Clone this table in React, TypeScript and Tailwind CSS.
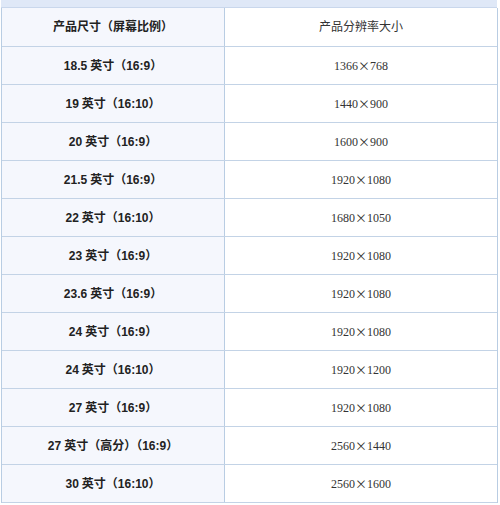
import React from "react";

const rows: [string, string, string, string][] = [
  ["18.5", "英寸（16:9）", "1366", "768"],
  ["19", "英寸（16:10）", "1440", "900"],
  ["20", "英寸（16:9）", "1600", "900"],
  ["21.5", "英寸（16:9）", "1920", "1080"],
  ["22", "英寸（16:10）", "1680", "1050"],
  ["23", "英寸（16:9）", "1920", "1080"],
  ["23.6", "英寸（16:9）", "1920", "1080"],
  ["24", "英寸（16:9）", "1920", "1080"],
  ["24", "英寸（16:10）", "1920", "1200"],
  ["27", "英寸（16:9）", "1920", "1080"],
  ["27", "英寸（高分）（16:9）", "2560", "1440"],
  ["30", "英寸（16:10）", "2560", "1600"],
];

const cjk = { fontFamily: '"Liberation Sans", "Noto Sans CJK SC", sans-serif' };
const serif = { fontFamily: '"Liberation Serif", "Noto Sans CJK SC", serif' };
const cjkOnly = { fontFamily: '"Noto Sans CJK SC", sans-serif' };

export default function App() {
  return (
    <div className="w-[500px] h-[505px] bg-white overflow-hidden">
      <div className="h-[8px] bg-[#dfe8f7] border-b border-[#c9d7ec] ml-[1px] mr-[3px]" />
      <div className="ml-[1px] w-[497px] border-l border-r border-[#b9cde3]">
        <div className="flex h-[39px] border-b border-[#c3d3e6]">
          <div
            className="w-[223px] flex items-center justify-center bg-[#f5f7fd] border-r border-[#b9cde3] text-[12px] font-bold text-[#222]"
            style={cjk}
          >
            产品尺寸（屏幕比例）
          </div>
          <div
            className="flex-1 flex items-center justify-center text-[12px] text-[#333]"
            style={cjk}
          >
            产品分辨率大小
          </div>
        </div>
        {rows.map(([n, rest, w, h], i) => (
          <div key={i} className="flex h-[38px] border-b border-[#c3d3e6]">
            <div
              className="w-[223px] flex items-center justify-center bg-[#f5f7fd] border-r border-[#b9cde3] text-[12px] font-bold text-[#222]"
              style={cjk}
            >
              <span className="mr-[3px]">{n}</span>
              <span>{rest}</span>
            </div>
            <div
              className="flex-1 flex items-center justify-center text-[12px] text-[#333]"
              style={serif}
            >
              <span>{w}</span>
              <span className="text-[12px] leading-none" style={cjkOnly}>
                ×
              </span>
              <span>{h}</span>
            </div>
          </div>
        ))}
      </div>
    </div>
  );
}
